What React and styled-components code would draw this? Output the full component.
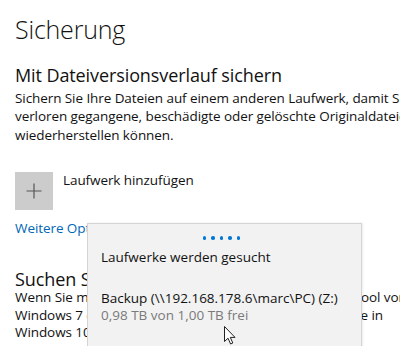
import React from "react";
import styled, { createGlobalStyle } from "styled-components";

const Global = createGlobalStyle`
  html, body {
    margin: 0;
    padding: 0;
    background: #fff;
    overflow: hidden;
  }
  body {
    font-family: "Open Sans", "Noto Sans", sans-serif;
    color: #000;
  }
`;

const Page = styled.div`
  position: relative;
  width: 400px;
  height: 346px;
  overflow: hidden;
  padding-left: 15px;
  box-sizing: border-box;
`;

const Title = styled.h1`
  margin: 13px 0 0;
  font-size: 25px;
  line-height: 32px;
  font-weight: 300;
  letter-spacing: -0.2px;
  color: #111;
`;

const Heading = styled.h2`
  margin: ${(p) => p.$top}px 0 0;
  font-size: 18px;
  line-height: 20px;
  font-weight: 400;
  letter-spacing: -0.1px;
  color: #111;
`;

const Text = styled.p`
  margin: ${(p) => p.$top}px 0 0;
  font-size: 13.5px;
  line-height: ${(p) => p.$lh || 18.5}px;
  letter-spacing: -0.08px;
  white-space: nowrap;
  color: #111;
`;

const AddRow = styled.div`
  display: flex;
  align-items: flex-start;
  gap: 10px;
  margin-top: 28px;
`;

const AddButton = styled.div`
  width: 38px;
  height: 38px;
  background: #cccccc;
  display: flex;
  align-items: center;
  justify-content: center;
`;

const AddLabel = styled.span`
  font-size: 13.5px;
  line-height: 18.5px;
  letter-spacing: -0.08px;
  margin-top: -1px;
  color: #111;
`;

const Link = styled.a`
  display: block;
  margin-top: 8.5px;
  font-size: 13.5px;
  line-height: 18.5px;
  letter-spacing: -0.08px;
  color: #0067b8;
  text-decoration: none;
`;

const Flyout = styled.div`
  position: absolute;
  left: 87px;
  top: 223px;
  width: 275px;
  height: 140px;
  box-sizing: border-box;
  background: #f2f2f2;
  border: 1px solid #d4d4d4;
  box-shadow: 1px 0 2px rgba(0, 0, 0, 0.08);
  padding: 12px 13px 0;
`;

const Dots = styled.div`
  display: flex;
  justify-content: center;
  gap: 5px;
  padding-right: 6px;
`;

const Dot = styled.span`
  width: 3.5px;
  height: 3.5px;
  border-radius: 50%;
  background: #0078d7;
`;

const FlyText = styled.div`
  margin-top: ${(p) => p.$top || 0}px;
  font-size: 13.5px;
  line-height: 17px;
  white-space: nowrap;
  color: ${(p) => (p.$muted ? "#7a7a7a" : "#111")};
`;

const Cursor = styled.svg`
  position: absolute;
  left: 224px;
  top: 326px;
`;

export default function App() {
  return (
    <Page>
      <Global />
      <Title>Sicherung</Title>
      <Heading $top={20}>Mit Dateiversionsverlauf sichern</Heading>
      <Text $top={3.5}>
        Sichern Sie Ihre Dateien auf einem anderen Laufwerk, damit Sie
        <br />
        verloren gegangene, beschädigte oder gelöschte Originaldateien
        <br />
        wiederherstellen können.
      </Text>
      <AddRow>
        <AddButton>
          <svg width="16" height="16" viewBox="0 0 16 16">
            <path d="M8 0.5V15.5M0.5 8H15.5" stroke="#555" strokeWidth="1.2" fill="none" />
          </svg>
        </AddButton>
        <AddLabel>Laufwerk hinzufügen</AddLabel>
      </AddRow>
      <Link href="#">Weitere Optionen</Link>
      <Heading $top={32}>Suchen Sie nach einer älteren Sicherung</Heading>
      <Text $top={0} $lh={17.5}>
        Wenn Sie mit dem Sicherungs- und Wiederherstellungstool von
        <br />
        Windows 7 eine Sicherung erstellt haben, funktioniert sie in
        <br />
        Windows 10 weiterhin.
      </Text>

      <Flyout>
        <Dots>
          <Dot />
          <Dot />
          <Dot />
          <Dot />
          <Dot />
        </Dots>
        <FlyText $top={9}>Laufwerke werden gesucht</FlyText>
        <FlyText $top={24}>Backup (\\192.168.178.6\marc\PC) (Z:)</FlyText>
        <FlyText $muted>0,98 TB von 1,00 TB frei</FlyText>
      </Flyout>

      <Cursor width="12" height="19" viewBox="0 0 12 19">
        <path
          d="M0.5 0.5V15.5L4 12.2L6.6 18L8.8 17L6.3 11.4H11Z"
          fill="#fff"
          stroke="#222"
          strokeWidth="1"
          strokeLinejoin="round"
        />
      </Cursor>
    </Page>
  );
}
